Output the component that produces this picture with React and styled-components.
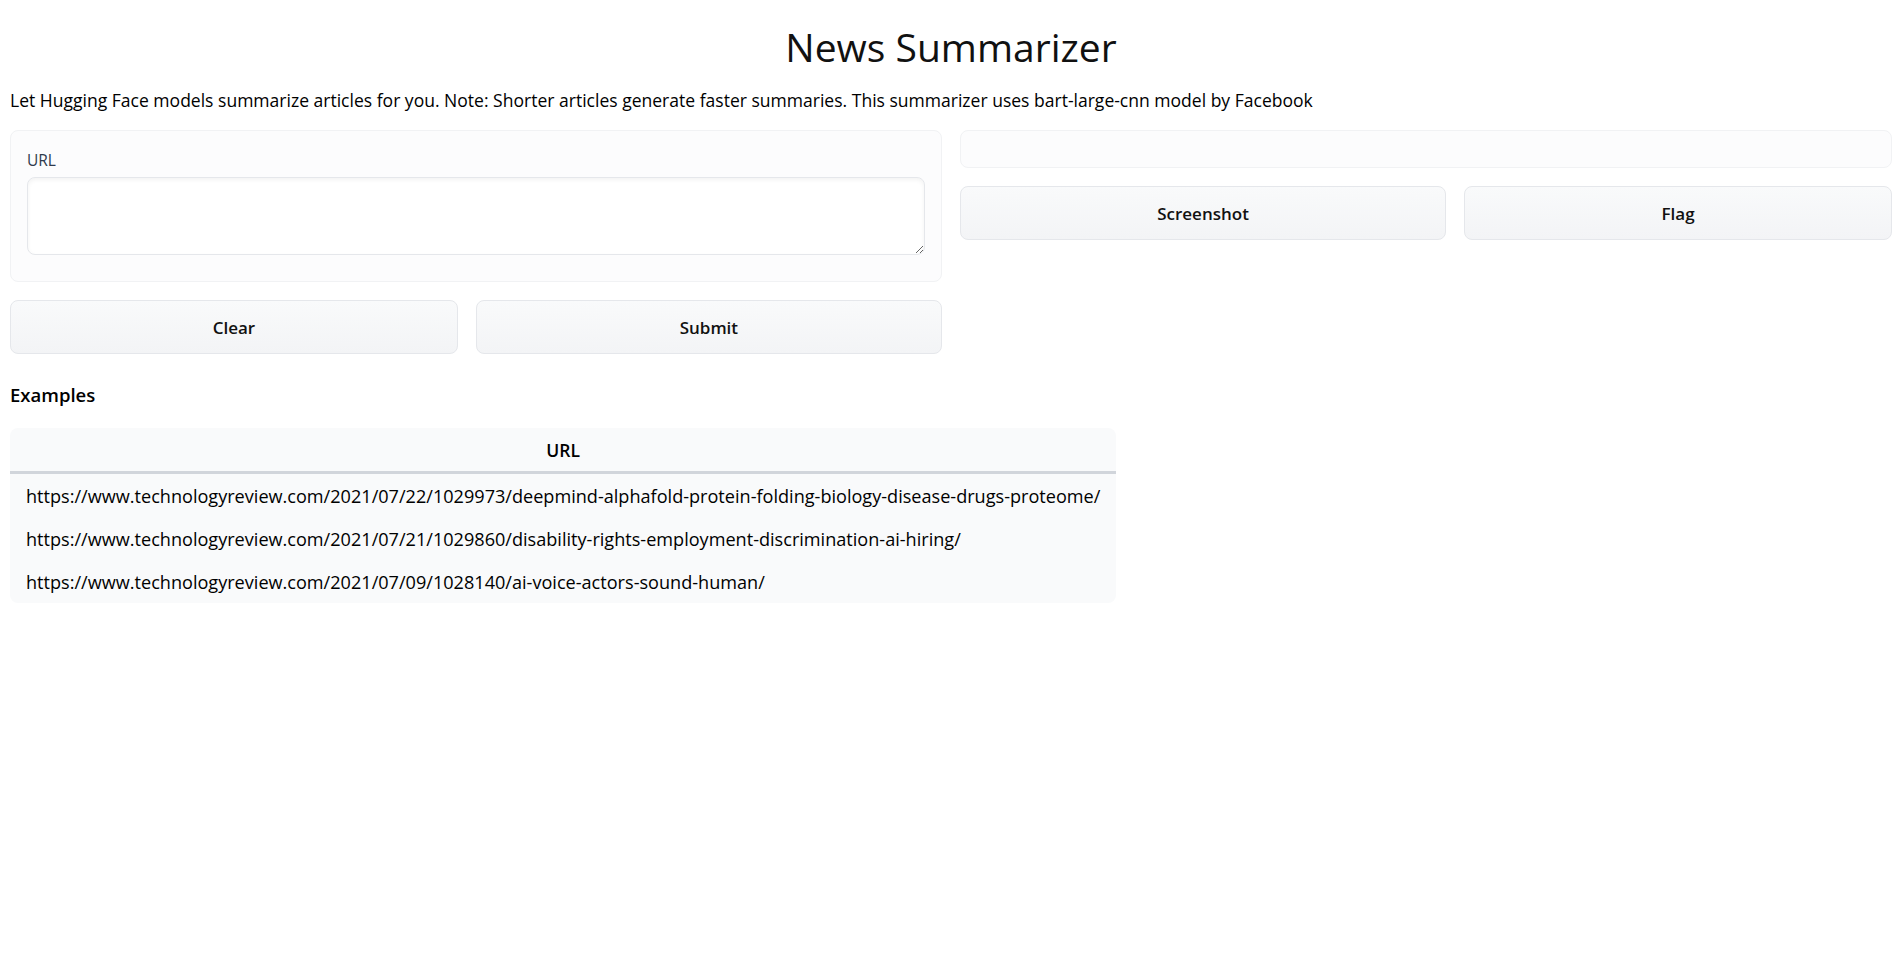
import React from 'react'
import styled, { createGlobalStyle } from 'styled-components'

const GlobalStyle = createGlobalStyle`
  body {
    margin: 0;
    background: #ffffff;
    color: #000000;
    font-family: "Open Sans", "Noto Sans", sans-serif;
  }
`

const Page = styled.div`
  padding: 0 10px 40px;
`

const Title = styled.h1`
  margin: 23px 0 0;
  font-size: 39px;
  line-height: 48px;
  font-weight: 400;
  text-align: center;
  color: #111111;
`

const Description = styled.p`
  margin: 16px 0 0;
  font-size: 17.55px;
  line-height: 26px;
`

const Columns = styled.div`
  margin-top: 17px;
  display: grid;
  grid-template-columns: 1fr 1fr;
  gap: 18px;
  align-items: start;
`

const Column = styled.div`
  display: flex;
  flex-direction: column;
  gap: 18px;
`

const Block = styled.div`
  background: #fcfcfd;
  border: 1px solid #f1f2f4;
  border-radius: 8px;
  padding: 18px 16px 26px;
`

const Label = styled.label`
  display: block;
  font-size: 15.5px;
  line-height: 22px;
  color: #2f3a4c;
  margin-bottom: 6px;
`

const TextArea = styled.textarea`
  display: block;
  box-sizing: border-box;
  width: 100%;
  height: 78px;
  border: 1px solid #e5e7eb;
  border-radius: 8px;
  background: #ffffff;
  box-shadow: inset 0 2px 4px rgba(0, 0, 0, 0.05);
  font-family: inherit;
  font-size: 16px;
  padding: 8px 12px;
  outline: none;
`

const OutputBox = styled.div`
  height: 36px;
  background: #fcfcfd;
  border: 1px solid #f1f2f4;
  border-radius: 8px;
`

const ButtonRow = styled.div`
  display: flex;
  gap: 18px;
`

const Button = styled.button`
  flex: ${p => p.grow} 1 0;
  height: 54px;
  border: 1px solid #e5e7eb;
  border-radius: 8px;
  background: linear-gradient(to bottom, #f9fafb, #f3f4f6);
  font-family: inherit;
  font-size: 17px;
  font-weight: 600;
  color: #111111;
  cursor: pointer;
`

const Heading = styled.h2`
  margin: 28px 0 20px;
  font-size: 18.5px;
  line-height: 26px;
  font-weight: 600;
`

const Table = styled.table`
  border-collapse: collapse;
  background: #f9fafb;
  border-radius: 8px;
  overflow: hidden;
  font-size: 18.1px;
`

const HeadCell = styled.th`
  height: 43px;
  padding: 0 16px;
  font-weight: 600;
  font-size: 17.5px;
  text-align: center;
  border-bottom: 3px solid #d1d5db;
`

const Cell = styled.td`
  height: 43px;
  padding: 0 16px;
  white-space: nowrap;
`

const examples = [
  'https://www.technologyreview.com/2021/07/22/1029973/deepmind-alphafold-protein-folding-biology-disease-drugs-proteome/',
  'https://www.technologyreview.com/2021/07/21/1029860/disability-rights-employment-discrimination-ai-hiring/',
  'https://www.technologyreview.com/2021/07/09/1028140/ai-voice-actors-sound-human/'
]

const App = () => (
  <Page>
    <GlobalStyle />
    <Title>News Summarizer</Title>
    <Description>
      Let Hugging Face models summarize articles for you. Note: Shorter articles generate faster
      summaries. This summarizer uses bart-large-cnn model by Facebook
    </Description>
    <Columns>
      <Column>
        <Block>
          <Label>URL</Label>
          <TextArea />
        </Block>
        <ButtonRow>
          <Button grow={447}>Clear</Button>
          <Button grow={466}>Submit</Button>
        </ButtonRow>
      </Column>
      <Column>
        <OutputBox />
        <ButtonRow>
          <Button grow={487}>Screenshot</Button>
          <Button grow={427}>Flag</Button>
        </ButtonRow>
      </Column>
    </Columns>
    <Heading>Examples</Heading>
    <Table>
      <thead>
        <tr>
          <HeadCell>URL</HeadCell>
        </tr>
      </thead>
      <tbody>
        {examples.map(url => (
          <tr key={url}>
            <Cell>{url}</Cell>
          </tr>
        ))}
      </tbody>
    </Table>
  </Page>
)

export default App
